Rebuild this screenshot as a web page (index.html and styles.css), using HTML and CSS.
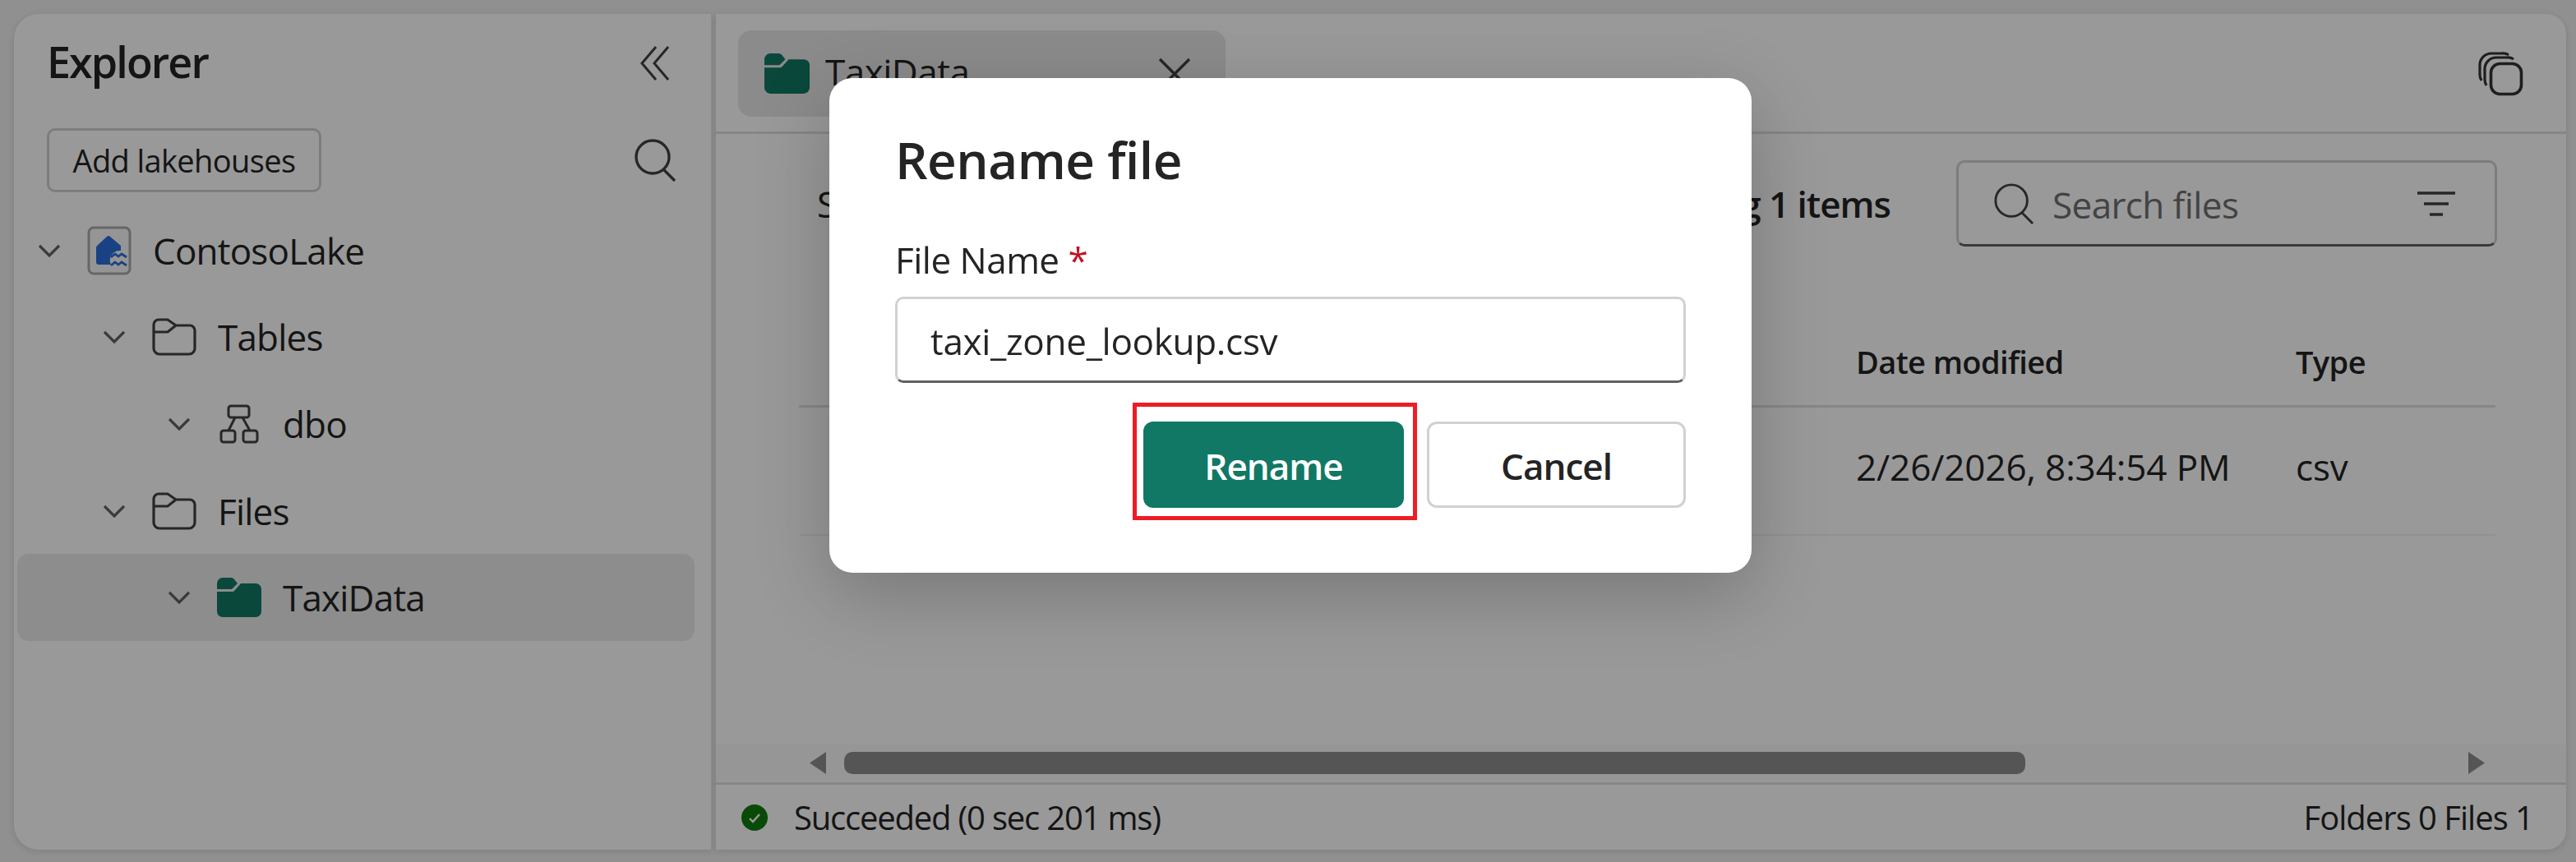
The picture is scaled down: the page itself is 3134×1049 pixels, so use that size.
FILE: index.html
```html
<!DOCTYPE html>
<html lang="en">
<head>
    <meta charset="UTF-8">
    <title>Rename file</title>
    <link rel="stylesheet" href="styles.css">
</head>
<body>
    <div class="app">
        <aside class="sidebar">
            <div class="side-head">
                <h2>Explorer</h2>
                <svg class="collapse" width="36" height="42" viewBox="0 0 36 42" fill="none" stroke="#424242" stroke-width="3"><path d="M19 1 2 21l17 20"/><path d="M34 1 17 21l17 20"/></svg>
            </div>
            <div class="side-tools">
                <button class="add-btn">Add lakehouses</button>
                <svg width="52" height="52" viewBox="0 0 52 52" fill="none" stroke="#424242" stroke-width="3.4"><circle cx="23" cy="22" r="20"/><path d="M36 37l14 14"/></svg>
            </div>
            <div class="tree">
                <div class="row depth-0">
                    <svg class="chev" width="26" height="16" viewBox="0 0 26 16"><path d="M1 2l12 12L25 2"/></svg>
                    <span class="ico">
                        <svg width="54" height="60" viewBox="0 0 54 60">
                            <rect x="2" y="2" width="50" height="56" rx="6" fill="#f8f8f8" stroke="#aaa" stroke-width="3"/>
                            <path d="M12 24 24 13a3 3 0 0 1 4 0l13 11v6a12 12 0 0 0-12 17H14a3 3 0 0 1-3-3V26z" fill="#2b6fdc"/>
                            <path d="M29 38l5-4 4 3 4-3 6 4M29 48l5-4 4 3 4-3 6 4" fill="none" stroke="#2b6fdc" stroke-width="2.8"/>
                        </svg>
                    </span>
                    <span>ContosoLake</span>
                </div>
                <div class="row depth-1">
                    <svg class="chev" width="26" height="16" viewBox="0 0 26 16"><path d="M1 2l12 12L25 2"/></svg>
                    <span class="ico">
                        <svg width="54" height="46" viewBox="0 0 54 46" fill="none" stroke="#424242" stroke-width="3.2"><path d="M2 8a6 6 0 0 1 6-6h11l10 7h17a6 6 0 0 1 6 6v22a7 7 0 0 1-7 7H9a7 7 0 0 1-7-7zM2 17h17l10-8"/></svg>
                    </span>
                    <span>Tables</span>
                </div>
                <div class="row depth-2">
                    <svg class="chev" width="26" height="16" viewBox="0 0 26 16"><path d="M1 2l12 12L25 2"/></svg>
                    <span class="ico">
                        <svg width="48" height="48" viewBox="0 0 48 48" fill="none" stroke="#424242" stroke-width="3"><rect x="11" y="2" width="25" height="14" rx="3"/><rect x="2" y="32" width="17" height="14" rx="3"/><rect x="29" y="32" width="17" height="14" rx="3"/><path d="M19 16 11 32M28 16l9 16"/></svg>
                    </span>
                    <span>dbo</span>
                </div>
                <div class="row depth-1">
                    <svg class="chev" width="26" height="16" viewBox="0 0 26 16"><path d="M1 2l12 12L25 2"/></svg>
                    <span class="ico">
                        <svg width="54" height="46" viewBox="0 0 54 46" fill="none" stroke="#424242" stroke-width="3.2"><path d="M2 8a6 6 0 0 1 6-6h11l10 7h17a6 6 0 0 1 6 6v22a7 7 0 0 1-7 7H9a7 7 0 0 1-7-7zM2 17h17l10-8"/></svg>
                    </span>
                    <span>Files</span>
                </div>
                <div class="row depth-2 selected">
                    <svg class="chev" width="26" height="16" viewBox="0 0 26 16"><path d="M1 2l12 12L25 2"/></svg>
                    <span class="ico">
                        <svg width="54" height="48" viewBox="0 0 54 48" fill="#117865"><path d="M0 7a7 7 0 0 1 7-7h10a5 5 0 0 1 4 2l4 5-7 7H0z"/><path d="M0 17h19a3 3 0 0 0 2-1l8-9h18a7 7 0 0 1 7 7v27a7 7 0 0 1-7 7H7a7 7 0 0 1-7-7z"/></svg>
                    </span>
                    <span>TaxiData</span>
                </div>
            </div>
        </aside>

        <main class="main">
            <div class="tabs">
                <div class="tab">
                    <svg width="55" height="51" viewBox="0 0 54 48" fill="#117865"><path d="M0 7a7 7 0 0 1 7-7h10a5 5 0 0 1 4 2l4 5-7 7H0z"/><path d="M0 17h19a3 3 0 0 0 2-1l8-9h18a7 7 0 0 1 7 7v27a7 7 0 0 1-7 7H7a7 7 0 0 1-7-7z"/></svg>
                    <span class="tab-name">TaxiData</span>
                    <svg class="tab-x" width="40" height="40" viewBox="0 0 40 40" stroke="#424242" stroke-width="3.4"><path d="M2 2l36 36M38 2 2 38"/></svg>
                </div>
                <svg width="55" height="54" viewBox="0 0 55 54" fill="none" stroke="#333" stroke-width="3.2"><rect x="15.5" y="14.5" width="37" height="37" rx="11" stroke-width="3.6"/><path d="M10 41a14 14 0 0 1-2-8V20A14 14 0 0 1 22 7h12a12 12 0 0 1 9 2"/><path d="M4 35a14 14 0 0 1-2-7V16A14 14 0 0 1 16 2h12a12 12 0 0 1 9 2"/></svg>
            </div>

            <div class="content">
                <div class="toolbar">
                    <span>S</span>
                    <div class="toolbar-right">
                        <strong>Showing 1 items</strong>
                        <div class="search">
                            <svg width="50" height="50" viewBox="0 0 52 52" fill="none" stroke="#424242" stroke-width="3"><circle cx="23" cy="22" r="20"/><path d="M36 37l14 14"/></svg>
                            <span class="search-text">Search files</span>
                            <svg width="46" height="30" viewBox="0 0 46 30" stroke="#424242" stroke-width="3.4"><path d="M0 2h46M8 15h30M15 28h16"/></svg>
                        </div>
                    </div>
                </div>

                <div class="table">
                    <div class="cell head"></div>
                    <div class="cell head">Date modified</div>
                    <div class="cell head">Type</div>
                    <div class="cell body"></div>
                    <div class="cell body">2/26/2026, 8:34:54 PM</div>
                    <div class="cell body">csv</div>
                </div>
            </div>

            <div class="scrollbar">
                <svg width="20" height="27" viewBox="0 0 20 27" fill="#8e8e8e"><path d="M20 0v27L0 13.5z"/></svg>
                <div class="scroll-track"><div class="thumb"></div></div>
                <svg width="20" height="27" viewBox="0 0 20 27" fill="#8e8e8e"><path d="M0 0v27l20-13.5z"/></svg>
            </div>

            <div class="status">
                <div class="status-left">
                    <svg width="32" height="32" viewBox="0 0 32 32"><circle cx="16" cy="16" r="16" fill="#107c10"/><path d="M10 17l4 4 8-9" fill="none" stroke="#fff" stroke-width="2.4"/></svg>
                    <span class="status-msg">Succeeded (0 sec 201 ms)</span>
                </div>
                <span class="status-count">Folders 0 Files 1</span>
            </div>
        </main>
    </div>

    <div class="overlay"></div>

    <div class="modal">
        <h1>Rename file</h1>
        <div class="field-label">File Name <span class="req">*</span></div>
        <div class="input">taxi_zone_lookup.csv</div>
        <div class="actions">
            <button class="btn primary">Rename<span class="callout"></span></button>
            <button class="btn">Cancel</button>
        </div>
    </div>
</body>
</html>
```

FILE: styles.css
```css
* { box-sizing: border-box; }
html, body { margin: 0; height: 100%; }
body { font-family: "Open Sans", "Noto Sans", sans-serif; color: #242424; background: #f0f0f0; font-size: 44px; letter-spacing: -0.5px; overflow: hidden; }
button { font: inherit; letter-spacing: inherit; color: inherit; }

.app { display: flex; gap: 5px; height: 1049px; padding: 17px 12px 15px 17px; }

.sidebar { width: 849px; background: #fff; border-radius: 30px 0 0 30px; border-right: 1px solid #eaeaea; box-shadow: 0 2px 8px rgba(0,0,0,0.12); padding-left: 4px; }
.side-head { display: flex; justify-content: space-between; align-items: center; height: 60px; margin-top: 27px; padding: 0 50px 0 36px; }
.side-head h2 { margin: 0; font-size: 52px; font-weight: 600; letter-spacing: -1.9px; color: #242424; }
.collapse { margin-top: 6px; }
.side-tools { display: flex; justify-content: space-between; align-items: center; margin-top: 52px; padding: 0 42px 0 36px; }
.add-btn { width: 334px; height: 78px; padding: 0; font-size: 38px; letter-spacing: -0.6px; background: #fff; border: 3px solid #d1d1d1; border-radius: 10px; }

.tree { margin-top: 18px; margin-right: 20px; }
.row { display: flex; align-items: center; height: 105.6px; border-radius: 14px; letter-spacing: -0.8px; }
.row.selected { background: #ebebeb; }
.depth-0 { padding-left: 26px; }
.depth-1 { padding-left: 105px; }
.depth-2 { padding-left: 184px; }
.chev { fill: none; stroke: #616161; stroke-width: 3.2; flex: none; }
.ico { display: flex; justify-content: center; width: 54px; margin: 0 26px 0 33px; flex: none; }

.main { flex: 1; display: flex; flex-direction: column; min-width: 0; background: #fff; border-radius: 0 24px 24px 0; box-shadow: 0 2px 8px rgba(0,0,0,0.12); }
.tabs { display: flex; justify-content: space-between; align-items: flex-start; height: 146px; padding: 20px 52px 0 27px; border-bottom: 3px solid #e0e0e0; }
.tabs > svg { margin-top: 26px; }
.tab { display: flex; align-items: center; width: 593px; height: 105px; padding-left: 32px; background: #e8e8e8; border-radius: 16px; }
.tab-name { margin-left: 19px; position: relative; top: -3px; }
.tab-x { margin-left: auto; margin-right: 42px; }

.content { flex: 1; padding: 32px 84px 0 123px; }
.toolbar { display: flex; justify-content: space-between; align-items: center; height: 105px; }
.toolbar-right { display: flex; align-items: center; gap: 80px; }
.toolbar-right strong { font-weight: 600; letter-spacing: -1px; }
.search { display: flex; align-items: center; width: 658px; height: 105px; padding: 0 48px 0 42px; border: 3px solid #d1d1d1; border-bottom-color: #616161; border-radius: 10px; }
.search-text { margin-left: 22px; margin-right: auto; color: #707070; letter-spacing: -0.6px; padding-top: 2px; }

.table { display: grid; grid-template-columns: 1fr 535px 243px; margin: 0 2px 0 -22px; }
.cell { display: flex; align-items: center; }
.head { height: 196px; padding-top: 87px; font-size: 38px; font-weight: 600; letter-spacing: -0.6px; border-bottom: 3px solid #e0e0e0; }
.body { height: 156px; padding-bottom: 10px; letter-spacing: -0.1px; border-bottom: 2px solid #f0f0f0; }

.scrollbar { display: flex; align-items: center; gap: 22px; height: 44px; margin-bottom: 2px; padding: 0 99px 0 114px; background: #fafafa; }
.scroll-track { flex: 1; }
.thumb { width: 1437px; height: 27px; background: #8e8e8e; border-radius: 10px; }

.status { display: flex; justify-content: space-between; align-items: center; height: 82px; padding: 0 40px 0 31px; border-top: 3px solid #e0e0e0; font-size: 40px; }
.status-left { display: flex; align-items: center; gap: 32px; }
.status-msg { letter-spacing: -1.2px; }
.status-count { letter-spacing: -1px; }

.overlay { position: fixed; inset: 0; background: rgba(0,0,0,0.4); }

.modal { position: absolute; left: 1009px; top: 95px; width: 1122px; height: 602px; padding: 60px 80px 0 80px; background: #fff; border-radius: 28px; box-shadow: 0 26px 90px rgba(0,0,0,0.22); }
.modal h1 { margin: 0; font-size: 62px; line-height: 78px; font-weight: 600; letter-spacing: -0.5px; }
.field-label { margin-top: 60px; line-height: 46px; }
.req { color: #c50f1f; }
.input { display: flex; align-items: center; height: 105px; margin-top: 22px; padding: 2px 0 0 40px; border: 3px solid #d1d1d1; border-bottom-color: #616161; border-radius: 10px; letter-spacing: -0.3px; }
.actions { display: flex; justify-content: flex-end; gap: 28px; margin-top: 47px; }
.btn { position: relative; width: 315px; height: 105px; padding: 3px 0 0; font-weight: 600; letter-spacing: -1px; background: #fff; border: 3px solid #d1d1d1; border-radius: 12px; }
.btn.primary { width: 317px; color: #fff; background: #117865; border: none; }
.callout { position: absolute; left: -13px; right: -16px; top: -23px; bottom: -15px; border: 5px solid #ee1c25; }
```
